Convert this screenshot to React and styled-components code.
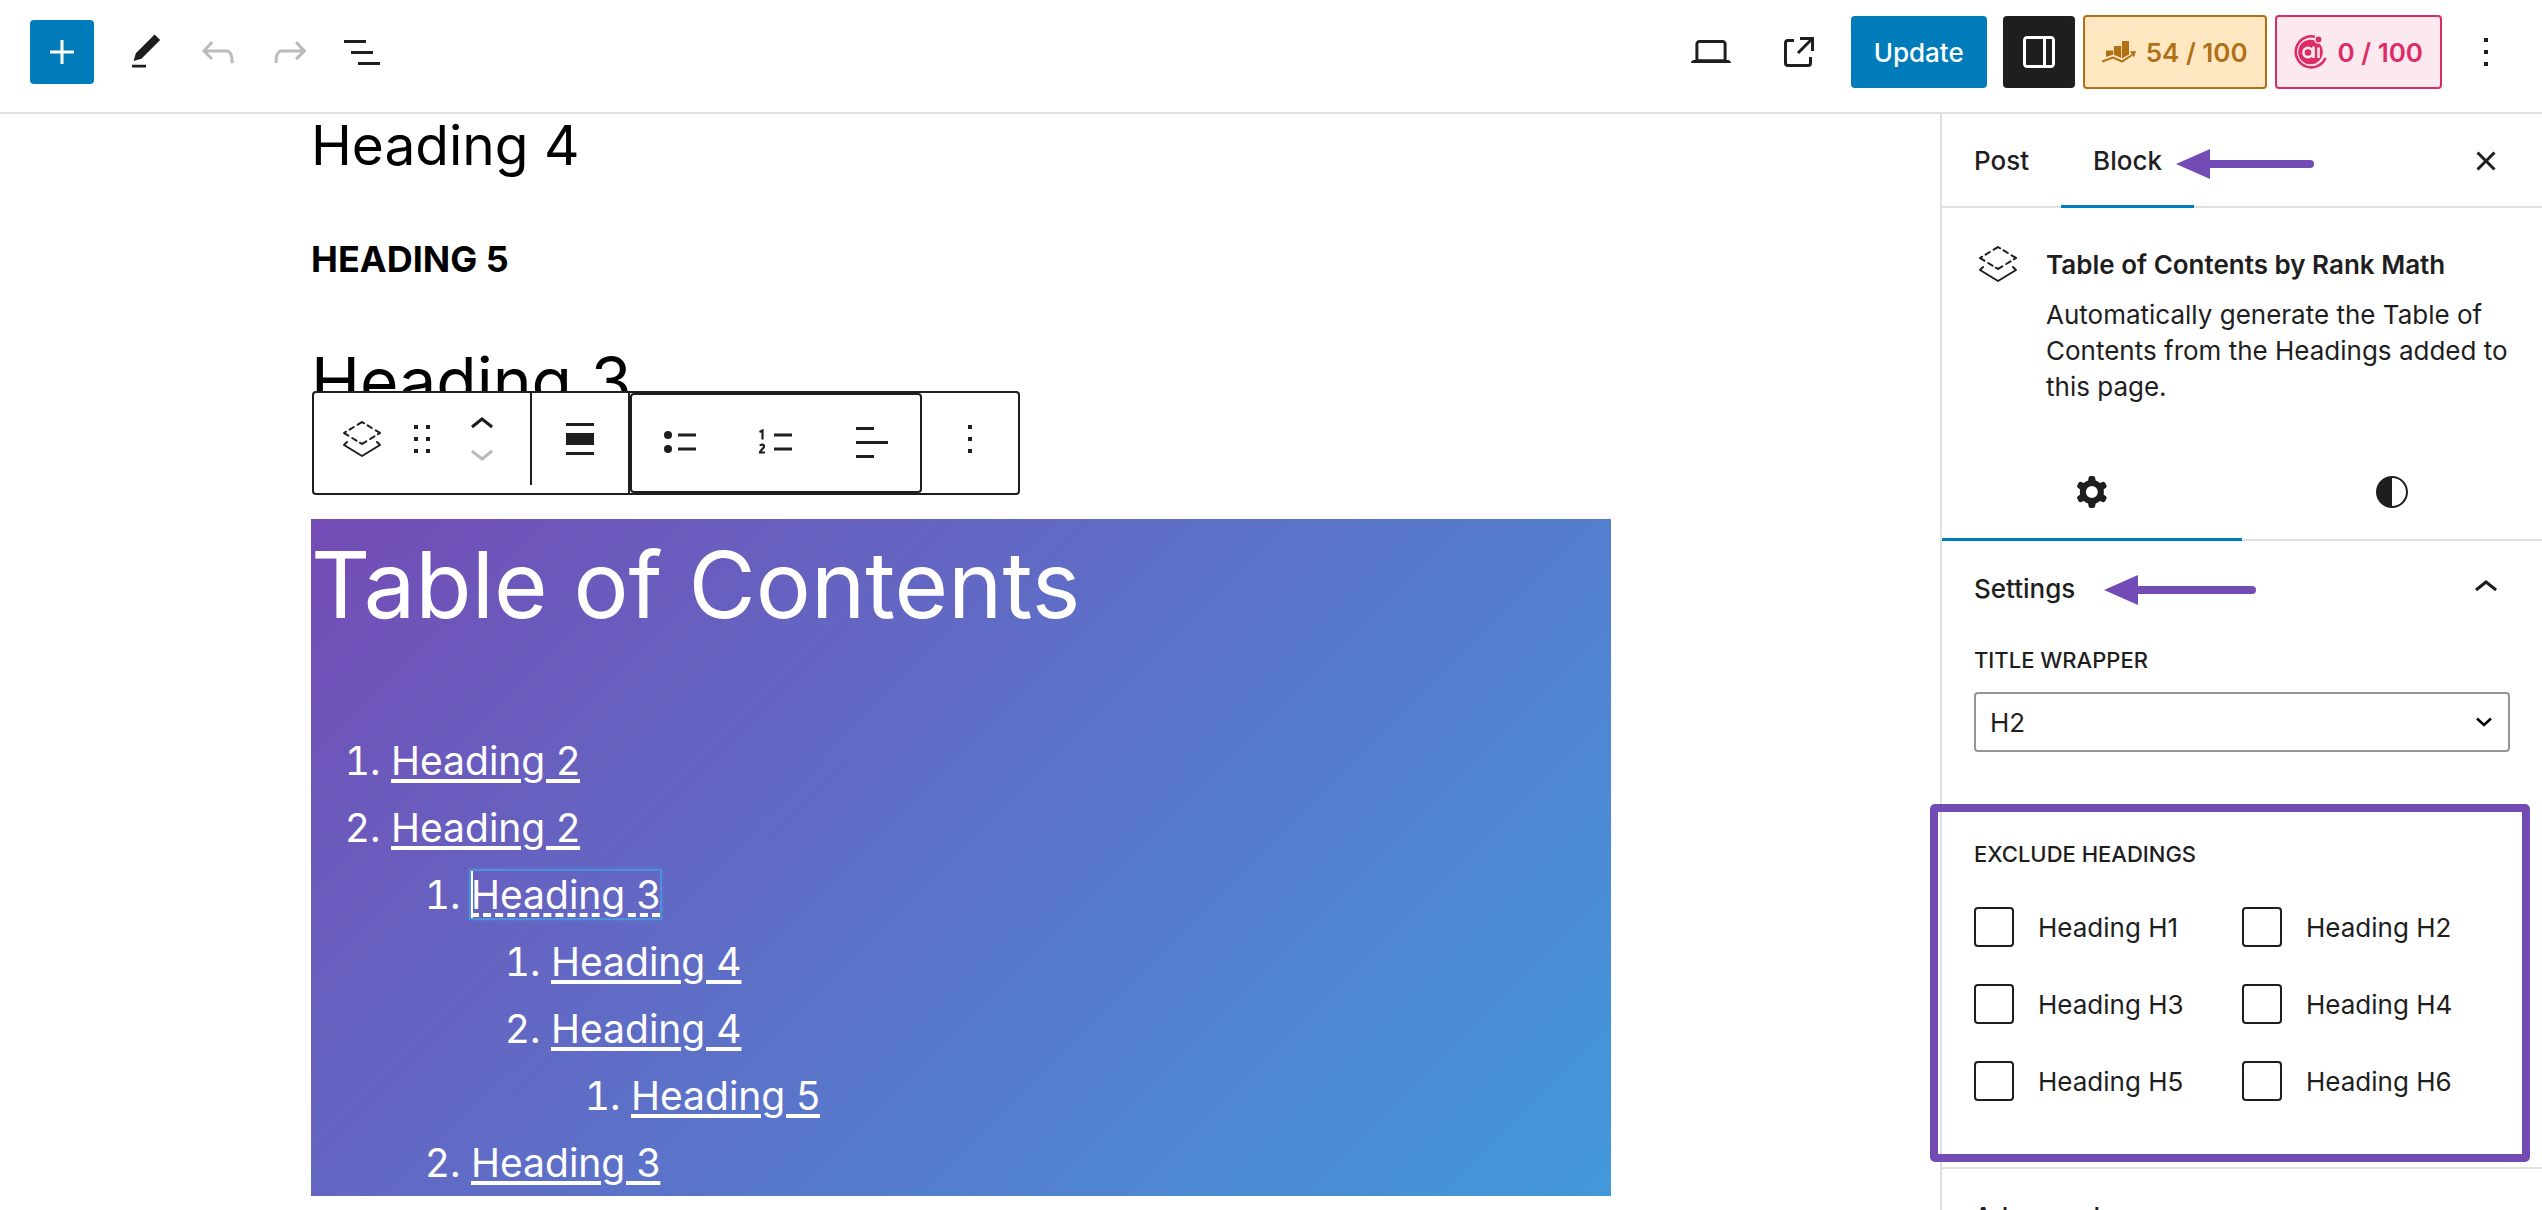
import React from "react";
import styled, { createGlobalStyle, css } from "styled-components";

const INK = "#1e1e1e";
const BLUE = "#007cba";
const LINE = "#e0e0e0";
const PURPLE = "#734bb5";

const GlobalStyle = createGlobalStyle`
  *, *::before, *::after { box-sizing: border-box; }
  html, body { margin: 0; }
  body {
    font-family: Inter, "Liberation Sans", sans-serif;
    font-size: 26px;
    color: ${INK};
    background: #fff;
    overflow: hidden;
  }
  button, input, select { font: inherit; color: inherit; margin: 0; }
  h2, h3, h4, h5, p, ol, fieldset, legend { margin: 0; padding: 0; border: 0; }
`;

/* ---------- icons ---------- */

const Glyph = ({ d, size = 48, rule }) => (
  <svg width={size} height={size} viewBox="0 0 24 24" fill="currentColor" aria-hidden="true">
    <path d={d} fillRule={rule} clipRule={rule} />
  </svg>
);

const paths = {
  plus: "M11.25 6h1.5v5.25H18v1.5h-5.25V18h-1.5v-5.25H6v-1.5h5.25z",
  edit: "M20.1 5.1L16.9 2 6.2 12.7l-1.3 4.4 4.5-1.3L20.1 5.1zM4 20.8h8v-1.5H4v1.5z",
  undo: "M18.3 11.7c-.6-.6-1.4-.9-2.3-.9H6.7l2.9-3.3-1.1-1-4.5 5L8.5 16l1-1-2.7-2.7H16c.5 0 .9.2 1.3.5 1 1 1 3.4 1 4.5v.3h1.5v-.2c0-1.5 0-4.3-1.5-5.7z",
  redo: "M15.6 6.5l-1.1 1 2.9 3.3H8c-.9 0-1.7.3-2.3.9-1.4 1.5-1.4 4.2-1.4 5.6v.2h1.5v-.3c0-1.1 0-3.5 1-4.5.3-.3.7-.5 1.3-.5h9.2L14.5 15l1.1 1.1 4.6-4.6-4.6-5z",
  listView: "M3 6h11v1.5H3V6Zm3.5 5.5h11V13h-11v-1.5ZM21 17H10v1.5h11V17Z",
  laptop: "M20.5 16h-.7V8c0-1.1-.9-2-2-2H6.2c-1.1 0-2 .9-2 2v8h-.7c-.8 0-1.5.7-1.5 1.5h20c0-.8-.7-1.5-1.5-1.5zM5.7 8c0-.3.2-.5.5-.5h11.6c.3 0 .5.2.5.5v7.6H5.7V8z",
  external: "M19.5 4.5h-7V6h4.44l-5.97 5.97 1.06 1.06L18 7.06v4.44h1.5v-7Zm-13 1a2 2 0 0 0-2 2v10a2 2 0 0 0 2 2h10a2 2 0 0 0 2-2v-3H17v3a.5.5 0 0 1-.5.5h-10a.5.5 0 0 1-.5-.5v-10a.5.5 0 0 1 .5-.5h3V5.5h-3Z",
  drawer: "M18 4H6c-1.1 0-2 .9-2 2v12c0 1.1.9 2 2 2h12c1.1 0 2-.9 2-2V6c0-1.1-.9-2-2-2zm-4 14.5H6c-.3 0-.5-.2-.5-.5V6c0-.3.2-.5.5-.5h8v13zm4.5-.5c0 .3-.2.5-.5.5h-2.5v-13H18c.3 0 .5.2.5.5v12z",
  more: "M13 19h-2v-2h2v2zm0-6h-2v-2h2v2zm0-6h-2V5h2v2z",
  close: "M12 13.06l3.712 3.713 1.061-1.06L13.061 12l3.712-3.712-1.06-1.06L12 10.938 8.288 7.227l-1.061 1.06L10.939 12l-3.712 3.712 1.06 1.061L12 13.061z",
  up: "M6.5 12.4L12 8l5.5 4.4-.9 1.2L12 10l-4.5 3.6-1-1.2z",
  down: "M17.5 11.6L12 16l-5.5-4.4.9-1.2L12 14l4.5-3.6 1 1.2z",
  cog: "M10.289 4.836A1 1 0 0111.275 4h1.306a1 1 0 01.987.836l.244 1.466c.787.26 1.503.679 2.108 1.218l1.393-.522a1 1 0 011.216.437l.653 1.13a1 1 0 01-.23 1.273l-1.148.944a6.025 6.025 0 010 2.435l1.149.946a1 1 0 01.23 1.272l-.653 1.13a1 1 0 01-1.216.437l-1.394-.522c-.605.54-1.32.958-2.108 1.218l-.244 1.466a1 1 0 01-.987.836h-1.306a1 1 0 01-.986-.836l-.244-1.466a5.995 5.995 0 01-2.108-1.218l-1.394.522a1 1 0 01-1.217-.436l-.653-1.131a1 1 0 01.23-1.272l1.149-.946a6.026 6.026 0 010-2.435l-1.148-.944a1 1 0 01-.23-1.272l.653-1.131a1 1 0 011.217-.437l1.393.522a5.994 5.994 0 012.108-1.218l.244-1.466zM14.929 12a3 3 0 11-6 0 3 3 0 016 0z",
  contrast: "M12 4c-4.4 0-8 3.6-8 8s3.6 8 8 8 8-3.6 8-8-3.6-8-8-8zm0 15V5c3.9 0 7 3.1 7 7s-3.1 7-7 7z",
  drag: "M8 7h2V5H8v2zm0 6h2v-2H8v2zm0 6h2v-2H8v2zm6-14v2h2V5h-2zm0 8h2v-2h-2v2zm0 6h2v-2h-2v2z",
  align: "M5 4h14v1.5H5zM5 9h14v6H5zM5 18.5h14V20H5z",
  textLeft: "M4 4.500h9V6H4zM4 11.500h16V13H4zM4 18.500h9V20H4z",
};

const LayersIcon = () => (
  <svg width="48" height="48" viewBox="0 0 48 48" fill="none" stroke="currentColor" strokeWidth="2" strokeLinecap="round" strokeLinejoin="round" aria-hidden="true">
    <path d="M24 7 L42 18 L24 29 L6 18 Z" strokeDasharray="2.5 4 5 4.5 5 0.1" />
    <path d="M9 27 L6 30 L24 41 L42 30 L39 27" />
  </svg>
);

const BulletListIcon = () => (
  <svg width="48" height="48" viewBox="0 0 48 48" fill="currentColor" aria-hidden="true">
    <circle cx="12" cy="17" r="4" />
    <circle cx="12" cy="31" r="4" />
    <path d="M22 15.5h18v3H22zM22 29.5h18v3H22z" />
  </svg>
);

const NumberListIcon = () => (
  <svg width="48" height="48" viewBox="0 0 48 48" fill="none" stroke="currentColor" aria-hidden="true">
    <path d="M22 17h18M22 31h18" strokeWidth="3" />
    <path d="M7.500 14 L10.500 12.600 V21.500M8 27.700 C8.700 26.200 12 26 12 28.400 C12 30.500 8.500 32 8 34.500 H13" strokeWidth="2.200" />
  </svg>
);

const SeoIcon = () => (
  <svg width="34" height="24" viewBox="0 0 34 24" fill="currentColor" aria-hidden="true">
    <path d="M4 10.500h7.300v4L4 17zM12 6h7.300v12L12 14.700zM20 1h7v13.500l-7 4z" />
    <path d="M0 21.500 L11 17.500 L20 21.500 L30 15" fill="none" stroke="currentColor" strokeWidth="2" />
    <path d="M28 11.500 L34 11 L32 17.500z" />
  </svg>
);

const AiIcon = () => (
  <svg width="34" height="36" viewBox="0 0 34 36" fill="none" stroke="currentColor" aria-hidden="true">
    <path d="M21 2.800 A15.500 15.500 0 1 0 31.500 24" strokeWidth="2.600" />
    <circle cx="16.500" cy="18" r="12.300" fill="currentColor" stroke="none" />
    <circle cx="14" cy="18.500" r="4.600" stroke="#fce8ef" strokeWidth="2.600" />
    <path d="M19.500 12.500v11.500M24.500 13.500v10.500" stroke="#fce8ef" strokeWidth="2.600" />
    <circle cx="24.500" cy="5.500" r="3.600" fill="currentColor" stroke="#fce8ef" strokeWidth="1.400" />
  </svg>
);

const SelectChevron = () => (
  <svg width="18" height="12" viewBox="0 0 18 12" fill="none" stroke="#000" strokeWidth="2.400" aria-hidden="true">
    <path d="M2 2.500 L9 9 L16 2.500" />
  </svg>
);

/* ---------- shell ---------- */

const Shell = styled.div`
  display: flex;
  flex-direction: column;
  height: 100vh;
  overflow: hidden;
`;

const TopBar = styled.header`
  flex: none;
  display: flex;
  align-items: center;
  justify-content: space-between;
  padding: 15px 20px 23px 30px;
  border-bottom: 2px solid ${LINE};
`;

const Cluster = styled.div`
  display: flex;
  align-items: center;
  gap: ${(p) => p.$gap || 0}px;
`;

const IconButton = styled.button`
  display: flex;
  align-items: center;
  justify-content: center;
  width: ${(p) => p.$w || 72}px;
  height: ${(p) => p.$h || 72}px;
  padding: 0;
  border: 0;
  border-radius: 4px;
  background: ${(p) => p.$bg || "transparent"};
  color: ${(p) => p.$fg || INK};
  svg { flex: none; }
`;

const UpdateButton = styled.button`
  height: 72px;
  padding: 0 23px;
  border: 0;
  border-radius: 4px;
  background: ${BLUE};
  color: #fff;
  font-weight: 500;
`;

const ScoreButton = styled.button`
  display: flex;
  align-items: center;
  gap: 10px;
  height: 74px;
  padding: 0 17px;
  border: 2px solid ${(p) => p.$fg};
  border-radius: 4px;
  background: ${(p) => p.$bg};
  color: ${(p) => p.$fg};
  font-weight: 600;
`;

const Body = styled.div`
  flex: 1;
  min-height: 0;
  display: flex;
`;

/* ---------- canvas ---------- */

const Canvas = styled.main`
  flex: 1;
  min-width: 0;
  padding-right: 18px;
  color: #000;
`;

const Content = styled.div`
  max-width: 1300px;
  margin: 0 auto;
  display: flex;
  flex-direction: column;
  gap: 60px;
`;

const Heading4 = styled.h4`
  font-size: 55px;
  line-height: 62px;
  font-weight: 400;
`;

const Heading5 = styled.h5`
  font-size: 36px;
  line-height: 46px;
  font-weight: 700;
`;

const Heading3 = styled.h3`
  font-size: 66px;
  line-height: 78px;
  font-weight: 400;
`;

const TocBlock = styled.section`
  position: relative;
  margin-top: 39px;
  background: linear-gradient(135deg, #744cb6 0%, #4299da 100%);
  color: #fff;
`;

const TocTitle = styled.h2`
  padding-bottom: 76px;
  font-size: 92px;
  line-height: 132px;
  font-weight: 400;
`;

const TocList = styled.ol`
  padding-left: 80px;
  font-size: 39px;
  line-height: 67px;
`;

const TocLink = styled.a`
  color: inherit;
  text-decoration: underline;
  text-decoration-thickness: 4px;
  text-underline-offset: 4px;
  ${(p) =>
    p.$editing &&
    css`
      text-decoration-style: dashed;
      outline: 2px solid #5090d8;
      box-shadow: inset 2px 0 0 #fff, 0 0 4px 2px rgba(80, 144, 216, 0.6);
    `}
`;

const Toolbar = styled.div`
  position: absolute;
  left: 1px;
  bottom: calc(100% + 24px);
  display: flex;
  height: 104px;
  border: 2px solid ${INK};
  border-radius: 4px;
  background: #fff;
  color: ${INK};
`;

const ToolGroup = styled.div`
  display: flex;
  align-items: center;
  padding: ${(p) => p.$pad || "0"};
  ${(p) => p.$divider && `border-right: 2px solid ${INK};`}
  ${(p) => p.$boxed && `border: 2px solid ${INK}; border-radius: 4px;`}
  ${(p) => p.$short && "margin-bottom: 8px;"}
`;

const Movers = styled.div`
  display: flex;
  flex-direction: column;
`;

/* ---------- sidebar ---------- */

const Sidebar = styled.aside`
  position: relative;
  flex: none;
  width: 602px;
  border-left: 2px solid ${LINE};
`;

const Tabs = styled.div`
  display: flex;
  align-items: stretch;
  height: ${(p) => p.$h}px;
  box-shadow: inset 0 -2px 0 ${LINE};
`;

const Tab = styled.button`
  position: relative;
  display: flex;
  align-items: center;
  justify-content: center;
  flex: ${(p) => (p.$grow ? 1 : "none")};
  padding: 0 32px 2px;
  border: 0;
  background: transparent;
  font-weight: 500;
  ${(p) => p.$active && `box-shadow: inset 0 -3px 0 ${BLUE};`}
`;

const TabEnd = styled.div`
  display: flex;
  align-items: center;
  margin-left: auto;
  padding-right: 20px;
`;

const Card = styled.div`
  display: flex;
  gap: 24px;
  padding: 32px 32px 40px;
`;

const CardIcon = styled.span`
  flex: none;
  width: 48px;
  height: 48px;
`;

const CardTitle = styled.h2`
  font-size: 26px;
  line-height: 49px;
  font-weight: 600;
`;

const CardText = styled.p`
  margin-top: 8px;
  line-height: 36px;
`;

const PanelToggle = styled.button`
  position: relative;
  display: flex;
  align-items: center;
  justify-content: space-between;
  width: 100%;
  height: 96px;
  padding: 0 32px 2px;
  border: 0;
  background: transparent;
  font-weight: 500;
  svg { flex: none; }
`;

const PanelBody = styled.div`
  display: flex;
  flex-direction: column;
  padding: 8px 32px 66px;
  border-bottom: 2px solid ${LINE};
`;

const FieldLabel = styled.label`
  display: block;
  font-size: 22px;
  line-height: 30px;
  font-weight: 500;
  text-transform: uppercase;
`;

const SelectWrap = styled.div`
  display: grid;
  align-items: center;
  margin: 17px 0 87px;
  & > * { grid-area: 1 / 1; }
  svg { justify-self: end; margin-right: 17px; pointer-events: none; }
`;

const Select = styled.select`
  appearance: none;
  width: 100%;
  height: 60px;
  padding: 0 48px 0 14px;
  border: 2px solid #949494;
  border-radius: 4px;
  background: #fff;
`;

const CheckGrid = styled.div`
  display: grid;
  grid-template-columns: 1fr 1fr;
  row-gap: 37px;
  padding-top: 38px;
`;

const CheckRow = styled.label`
  display: flex;
  align-items: center;
  gap: 24px;
  height: 40px;
`;

const Checkbox = styled.input`
  appearance: none;
  flex: none;
  width: 40px;
  height: 40px;
  border: 2px solid ${INK};
  border-radius: 4px;
  background: #fff;
`;

/* ---------- annotations ---------- */

const Highlight = styled.div`
  position: absolute;
  top: 690px;
  left: -12px;
  right: 12px;
  height: 358px;
  border: 8px solid ${PURPLE};
  border-radius: 5px;
  pointer-events: none;
`;

const ArrowSvg = styled.svg`
  position: absolute;
  top: 50%;
  left: ${(p) => p.$left}px;
  margin-top: ${(p) => p.$shift}px;
  color: ${PURPLE};
  pointer-events: none;
`;

const Arrow = ({ left, length, shift }) => (
  <ArrowSvg $left={left} $shift={shift} width={length} height="30" viewBox={`0 0 ${length} 30`} aria-hidden="true">
    <path d="M0 15 L34 0 V30 Z" fill="currentColor" />
    <path d={`M30 15 H${length - 4}`} stroke="currentColor" strokeWidth="8" strokeLinecap="round" />
  </ArrowSvg>
);

const entries = [
  { text: "Heading 2" },
  {
    text: "Heading 2",
    items: [
      {
        text: "Heading 3",
        editing: true,
        items: [
          { text: "Heading 4" },
          { text: "Heading 4", items: [{ text: "Heading 5" }] },
        ],
      },
      { text: "Heading 3" },
    ],
  },
];

const Entries = ({ items }) => (
  <TocList>
    {items.map((item, i) => (
      <li key={i}>
        <TocLink href="#" $editing={item.editing}>{item.text}</TocLink>
        {item.items && <Entries items={item.items} />}
      </li>
    ))}
  </TocList>
);

const levels = ["H1", "H2", "H3", "H4", "H5", "H6"];

export default function App() {
  return (
    <Shell>
      <GlobalStyle />
      <TopBar>
        <Cluster $gap={16}>
          <IconButton $w={64} $h={64} $bg={BLUE} $fg="#fff" aria-label="Add block"><Glyph d={paths.plus} /></IconButton>
          <Cluster>
            <IconButton aria-label="Tools"><Glyph d={paths.edit} size={42} /></IconButton>
            <IconButton $fg="#bbb" aria-label="Undo"><Glyph d={paths.undo} /></IconButton>
            <IconButton $fg="#bbb" aria-label="Redo"><Glyph d={paths.redo} /></IconButton>
            <IconButton aria-label="Document overview"><Glyph d={paths.listView} /></IconButton>
          </Cluster>
        </Cluster>
        <Cluster $gap={8}>
          <Cluster $gap={16}>
            <IconButton aria-label="Preview"><Glyph d={paths.laptop} /></IconButton>
            <IconButton aria-label="View post"><Glyph d={paths.external} /></IconButton>
            <UpdateButton>Update</UpdateButton>
            <IconButton $bg={INK} $fg="#fff" aria-label="Settings"><Glyph d={paths.drawer} /></IconButton>
          </Cluster>
          <ScoreButton $bg="#ffe8c1" $fg="#b07016"><SeoIcon />54 / 100</ScoreButton>
          <ScoreButton $bg="#fce8ef" $fg="#dc2c66"><AiIcon />0 / 100</ScoreButton>
          <IconButton aria-label="Options"><Glyph d={paths.more} /></IconButton>
        </Cluster>
      </TopBar>
      <Body>
        <Canvas>
          <Content>
            <Heading4>Heading 4</Heading4>
            <Heading5>HEADING 5</Heading5>
            <Heading3>Heading 3</Heading3>
            <TocBlock>
              <TocTitle>Table of Contents</TocTitle>
              <Entries items={entries} />
              <Toolbar role="toolbar" aria-label="Block tools">
                <ToolGroup $divider $short $pad="0 12px">
                  <IconButton aria-label="Table of Contents block"><LayersIcon /></IconButton>
                  <IconButton $w={48} aria-label="Drag"><Glyph d={paths.drag} /></IconButton>
                  <Movers>
                    <IconButton $h={28} aria-label="Move up"><Glyph d={paths.up} /></IconButton>
                    <IconButton $h={28} $fg="#bbb" aria-label="Move down"><Glyph d={paths.down} /></IconButton>
                  </Movers>
                </ToolGroup>
                <ToolGroup $divider $pad="0 12px 8px">
                  <IconButton aria-label="Align"><Glyph d={paths.align} /></IconButton>
                </ToolGroup>
                <ToolGroup $boxed $pad="0 0 2px">
                  <IconButton $w={96} aria-label="Unordered list"><BulletListIcon /></IconButton>
                  <IconButton $w={96} aria-label="Ordered list"><NumberListIcon /></IconButton>
                  <IconButton $w={96} aria-label="Plain list"><Glyph d={paths.textLeft} /></IconButton>
                </ToolGroup>
                <ToolGroup $pad="0 12px 8px">
                  <IconButton aria-label="More options"><Glyph d={paths.more} /></IconButton>
                </ToolGroup>
              </Toolbar>
            </TocBlock>
          </Content>
        </Canvas>
        <Sidebar>
          <Tabs $h={94}>
            <Tab>Post</Tab>
            <Tab $active>Block<Arrow left={115} length={138} shift={-12} /></Tab>
            <TabEnd><IconButton aria-label="Close settings"><Glyph d={paths.close} /></IconButton></TabEnd>
          </Tabs>
          <Card>
            <CardIcon><LayersIcon /></CardIcon>
            <div>
              <CardTitle>Table of Contents by Rank Math</CardTitle>
              <CardText>Automatically generate the Table of Contents from the Headings added to this page.</CardText>
            </div>
          </Card>
          <Tabs $h={96}>
            <Tab $grow $active aria-label="Settings"><Glyph d={paths.cog} rule="evenodd" /></Tab>
            <Tab $grow aria-label="Styles"><Glyph d={paths.contrast} /></Tab>
          </Tabs>
          <PanelToggle aria-expanded="true">
            Settings
            <Arrow left={162} length={152} shift={-14} />
            <Glyph d={paths.up} />
          </PanelToggle>
          <PanelBody>
            <FieldLabel htmlFor="title-wrapper">Title wrapper</FieldLabel>
            <SelectWrap>
              <Select id="title-wrapper" defaultValue="H2">
                {levels.map((l) => <option key={l}>{l}</option>)}
              </Select>
              <SelectChevron />
            </SelectWrap>
            <fieldset>
              <FieldLabel as="legend">Exclude headings</FieldLabel>
              <CheckGrid>
                {levels.map((l) => (
                  <CheckRow key={l}><Checkbox type="checkbox" />Heading {l}</CheckRow>
                ))}
              </CheckGrid>
            </fieldset>
          </PanelBody>
          <PanelToggle aria-expanded="false">Advanced<Glyph d={paths.down} /></PanelToggle>
          <Highlight />
        </Sidebar>
      </Body>
    </Shell>
  );
}
